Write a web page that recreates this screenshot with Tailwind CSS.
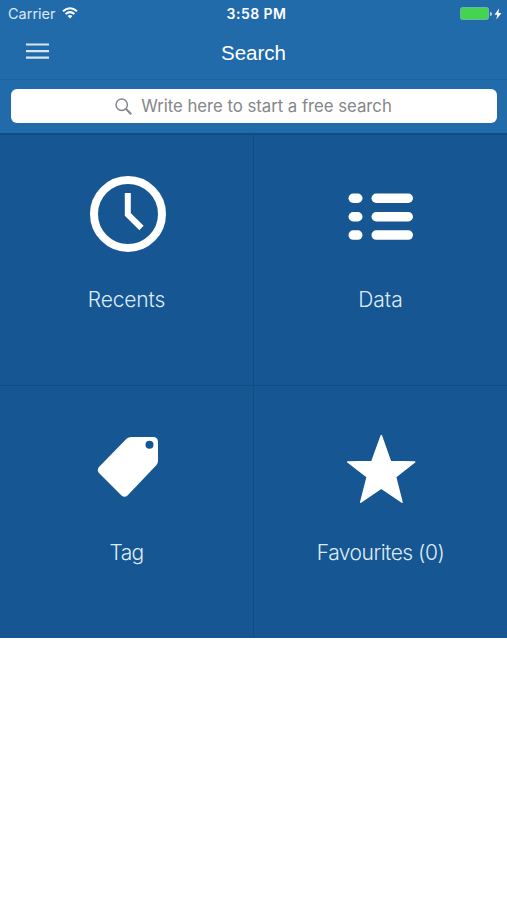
<!DOCTYPE html>
<html lang="en">
<head>
<meta charset="utf-8">
<title>Search</title>
<script src="https://cdn.jsdelivr.net/npm/@tailwindcss/browser@4"></script>
</head>
<body class="w-[507px] h-[900px] overflow-hidden bg-white font-['Inter',sans-serif] text-white">
<header class="h-[79px] bg-[#226bab]">
  <div class="grid grid-cols-3 h-[27px] items-center pl-[8px] pr-[5px]">
    <div class="flex items-center gap-[6px] text-[#d8e8f6]">
      <span class="text-[14.5px] leading-[27px] tracking-[0px]">Carrier</span>
      <svg class="w-[16px] h-[12px] -mt-[2px]" viewBox="0 0 16 12" fill="none" stroke="#fff" stroke-width="2"><path d="M1 4.3Q8-1.8 15 4.3M3.6 7Q8 3.2 12.4 7"/><path d="M5.6 9Q8 7 10.4 9L8 11.5Z" fill="#fff" stroke="none"/></svg>
    </div>
    <span class="text-center text-[14px] leading-[27px] font-semibold tracking-[0.45px] pl-[3px]">3:58 PM</span>
    <div class="flex items-center justify-end">
      <div class="w-[29px] h-[13px] rounded-[2.5px] bg-[#43d551] border border-[#6fb5a5]"></div>
      <div class="w-[2px] h-[4px] ml-px rounded-r-full bg-[#b9d4ea]"></div>
      <svg class="w-[8px] h-[12px] ml-[2px]" viewBox="0 0 8 12"><path d="M5 .5.5 6.7h2.8L2.3 11.5 7.5 5H4.5Z" fill="#fff"/></svg>
    </div>
  </div>
  <div class="grid grid-cols-3 h-[52px] px-[26px]">
    <svg class="w-[23px] h-[17px] mt-[16px]" viewBox="0 0 23 17" stroke="#d5e6f5" stroke-width="2.2"><path d="M0 1.5h23M0 8.2h23M0 14.7h23"/></svg>
    <h1 class="text-center text-[20.5px] leading-[51px] font-['Liberation_Sans',sans-serif]">Search</h1>
  </div>
</header>
<div class="h-[54px] bg-[#226bab] border-t border-[#1e62a0] pt-[9px] pl-[11px] pr-[10px]">
  <div class="h-[34px] rounded-[6px] bg-white flex items-center justify-center gap-[9px] text-[#85868a]">
    <svg class="w-[17px] h-[17px]" viewBox="0 0 17 17" fill="none" stroke="currentColor" stroke-width="1.5"><circle cx="6.7" cy="6.7" r="5.7"/><path d="m10.8 10.8 5.4 5.4" stroke-width="2"/></svg>
    <span class="text-[16.8px] tracking-[-0.04px] leading-[32px] pb-px mr-px">Write here to start a free search</span>
  </div>
</div>
<main class="grid grid-cols-[254px_253px] grid-rows-[251px_252px] bg-[#165692] border-t-2 border-[#124c84] text-[#dfecf8] text-[21px] font-light h-[505px]">
  <section class="border-r border-b border-[#114c84] pt-[37px] flex flex-col items-center">
    <svg class="w-[84px] h-[84px]" viewBox="0 0 84 84" fill="none" stroke="#fff"><circle cx="43" cy="42" r="34" stroke-width="8"/><path d="M42.8 21v21.5l13.7 13.5" stroke-width="6"/></svg>
    <span class="mt-[30px] leading-[28px] tracking-[-0.15px]">Recents</span>
  </section>
  <section class="border-b border-[#114c84] pt-[37px] flex flex-col items-center">
    <svg class="w-[84px] h-[84px]" viewBox="0 0 84 84" fill="#fff"><rect x="9.5" y="21.5" width="14" height="9.5" rx="4.7"/><rect x="32.5" y="21.5" width="41.5" height="9.5" rx="4.7"/><rect x="9.5" y="40" width="14" height="9.5" rx="4.7"/><rect x="32.5" y="40" width="41.5" height="9.5" rx="4.7"/><rect x="9.5" y="58.3" width="14" height="9.5" rx="4.7"/><rect x="32.5" y="58.3" width="41.5" height="9.5" rx="4.7"/></svg>
    <span class="mt-[30px] leading-[28px] tracking-[0px]">Data</span>
  </section>
  <section class="border-r border-[#114c84] pt-[39px] flex flex-col items-center">
    <svg class="w-[84px] h-[84px]" viewBox="0 0 84 84" fill="#fff"><path fill-rule="evenodd" d="M43 12.8Q44.5 12 46.5 12H68Q73 12 73 17V36Q73 38 71.5 40L42.5 70.5Q39.5 73 36.5 70.5L14 48Q11.5 45 14 42L40.5 14.7Q42 13.3 43 12.8ZM64.5 15.8a4 4 0 1 0 0 8 4 4 0 1 0 0-8Z"/></svg>
    <span class="mt-[30px] leading-[28px] tracking-[-0.7px]">Tag</span>
  </section>
  <section class="pt-[39px] flex flex-col items-center">
    <svg class="w-[84px] h-[84px]" viewBox="0 0 84 84" fill="#fff" stroke="#fff" stroke-width="1.5" stroke-linejoin="round"><path d="M42.3 10.6 51.5 36.4 75.7 36.9 56.6 52 63 77.2 42.3 63.2 21.7 77.2 28.2 52 8.7 36.9 32.9 36.4Z"/></svg>
    <span class="mt-[30px] leading-[28px] tracking-[-0.5px]">Favourites (0)</span>
  </section>
</main>
</body>
</html>
